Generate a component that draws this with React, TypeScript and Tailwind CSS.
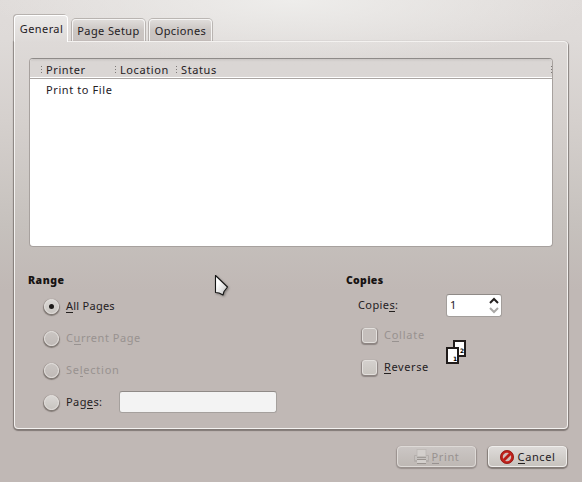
import type { ReactNode } from "react";

function U({ children }: { children: ReactNode }) {
  return <span className="inline-block h-[13px] leading-[13px] shadow-[0_1px_0_currentColor]">{children}</span>;
}

function Grip({ className = "" }: { className?: string }) {
  return (
    <svg className={`shrink-0 ${className}`} width="2" height="8" viewBox="0 0 2 8" fill="#7d7977" shapeRendering="crispEdges">
      <rect y="0" width="1" height="1" />
      <rect y="3" width="1" height="1" />
      <rect y="6" width="1" height="1" />
    </svg>
  );
}

function Radio({ checked = false, disabled = false }: { checked?: boolean; disabled?: boolean }) {
  return (
    <span
      className={`flex size-[15px] shrink-0 items-center justify-center rounded-full border border-[#e6e3e0] shadow-[0_1px_1px_1px_rgba(80,72,68,0.55)] ${
        disabled ? "bg-linear-to-b from-[#cac5c2] to-[#c0bab7]" : "bg-linear-to-b from-[#dad7d4] to-[#c9c5c1]"
      }`}
    >
      {checked && <span className="size-[5px] rounded-full bg-[#1d1a19]" />}
    </span>
  );
}

function Check({ disabled = false }: { disabled?: boolean }) {
  return (
    <span
      className={`size-[15px] shrink-0 rounded-[3px] border border-[#e3e0dd] shadow-[0_1px_1px_1px_rgba(80,72,68,0.45)] ${
        disabled ? "bg-[#c5bfbc]" : "bg-linear-to-b from-[#d4d0cd] to-[#c9c5c0]"
      }`}
    />
  );
}

function Tab({ children, width }: { children: ReactNode; width: string }) {
  return (
    <div
      className={`${width} flex h-[22px] items-center justify-center rounded-t-[4px] border border-b-0 border-[#f5f4f3] bg-linear-to-b from-[#dfdcda] via-[#cbc6c3] to-[#c9c3c0] shadow-[0_0_0_1px_rgba(120,112,108,0.4)]`}
    >
      {children}
    </div>
  );
}

export default function App() {
  return (
    <div className="flex h-[482px] w-[582px] flex-col overflow-hidden bg-[radial-gradient(ellipse_300px_65px_at_50%_0,#eeedeb,transparent),linear-gradient(#e0dcda_0,#dedad8_40px,#d5d0cd_120px,#c6c1bd_225px,#c0b8b5_290px)] px-[14px] font-['Noto_Sans','Open_Sans',sans-serif] text-[11px] leading-[16px] tracking-[0.4px] whitespace-nowrap text-[#24201f]">
      <div className="flex h-[41px] shrink-0 items-end gap-[4px]">
        <div className="z-10 mb-[-1px] flex h-[27px] w-[54px] items-center justify-center rounded-t-[4px] border border-b-0 border-white bg-linear-to-b from-[#ebe9e8] to-[#dedad8] pl-px shadow-[-1px_-1px_0_rgba(120,112,108,0.4)]">
          General
        </div>
        <Tab width="w-[73px]">Page Setup</Tab>
        <Tab width="w-[63px]">Opciones</Tab>
      </div>

      <div className="h-[388px] shrink-0 rounded-[4px] rounded-tl-none border border-[#f4f2f0] px-[14px] pt-[16px] shadow-[0_1px_1px_1px_rgba(95,88,84,0.65)]">
        <div className="h-[189px] w-[524px] overflow-hidden rounded-[4px] border border-[#a7a19e] border-t-[#8e8a88] bg-white">
          <div className="flex h-[20px] items-center border-b border-[#aaa5a2] bg-linear-to-b from-[#cbc7c5] via-[#dad6d4] via-15% to-[#dad6d4] pt-[2px] pl-[11px] tracking-[0.6px] shadow-[inset_0_-1px_0_white]">
            <Grip />
            <span className="w-[72px] pl-[3px]">Printer</span>
            <Grip />
            <span className="w-[59px] pl-[3px]">Location</span>
            <Grip />
            <span className="pl-[3px]">Status</span>
            <Grip className="mr-[-1px] ml-auto" />
          </div>
          <div className="pt-[3px] pl-[16px] tracking-[0.6px]">Print to File</div>
        </div>

        <div className="mt-[24px] flex">
          <section className="w-[318px]">
            <h2 className="-ml-px h-[19px] text-[10.5px] leading-[18px] font-black tracking-[0.5px] text-[#171312]">Range</h2>
            <div className="flex h-[32px] items-center gap-[7px] pl-[15px]">
              <Radio checked />
              <span className="tracking-[0.25px]"><U>A</U>ll Pages</span>
            </div>
            <div className="flex h-[32px] items-center gap-[7px] pl-[15px] text-[#989290]">
              <Radio disabled />
              <span className="tracking-[0.55px]">C<U>u</U>rrent Page</span>
            </div>
            <div className="flex h-[32px] items-center gap-[7px] pl-[15px] text-[#989290]">
              <Radio disabled />
              <span className="tracking-[0.75px]">Se<U>l</U>ection</span>
            </div>
            <div className="flex h-[32px] items-center gap-[7px] pl-[15px]">
              <Radio />
              <span className="w-[46px]">Pag<U>e</U>s:</span>
              <input aria-label="Pages" className="h-[22px] w-[158px] rounded-[3px] border border-[#a5a09d] border-t-[#8f8a87] bg-[#f3f3f3] outline-none" />
            </div>
          </section>

          <section>
            <h2 className="-ml-px h-[19px] text-[10.5px] leading-[18px] font-black tracking-[0.3px] text-[#171312]">Copies</h2>
            <div className="flex h-[30px] items-center pl-[11px]">
              <span className="w-[88px]">Copie<U>s</U>:</span>
              <div className="flex h-[23px] w-[56px] items-center justify-between rounded-[3px] border border-[#a39e9b] border-t-[#8f8a87] bg-white pr-[2px] pl-[3px]">
                <span>1</span>
                <svg width="10" height="18" viewBox="0 0 10 18" fill="none" strokeWidth="2">
                  <path d="M1 7 5 3 9 7" stroke="#24201f" />
                  <path d="M1 12 5 16 9 12" stroke="#aaa8a6" />
                </svg>
              </div>
            </div>
            <div className="mt-[-1px] flex items-center">
              <div className="w-[99px] pl-[15px]">
                <div className="flex h-[32px] items-center gap-[7px] text-[#989290]">
                  <Check disabled />
                  <span className="tracking-[0.75px]">C<U>o</U>llate</span>
                </div>
                <div className="flex h-[32px] items-center gap-[7px]">
                  <Check />
                  <span className="tracking-[0.6px]"><U>R</U>everse</span>
                </div>
              </div>
              <svg className="relative top-px shrink-0" width="20" height="24" viewBox="0 0 20 24">
                <rect x="8" y="1" width="11" height="15" fill="white" stroke="#211c1b" strokeWidth="2" />
                <text x="14" y="13" fontSize="6" fontWeight="700" fontFamily="DejaVu Sans" letterSpacing="0">2</text>
                <rect x="1" y="8" width="11" height="15" fill="white" stroke="#211c1b" strokeWidth="2" />
                <text x="7" y="21" fontSize="6" fontWeight="700" fontFamily="DejaVu Sans" letterSpacing="0">1</text>
              </svg>
            </div>
          </section>
        </div>
      </div>

      <div className="mt-[17px] flex justify-end gap-[12px] pr-px">
        <button className="flex h-[21px] w-[79px] items-center justify-center gap-[3px] rounded-[4px] border border-[#dedad7] bg-linear-to-b from-[#cbc6c4] to-[#beb8b4] tracking-[0.6px] text-[#989290] shadow-[0_1px_1px_1px_rgba(95,88,84,0.4)]">
          <svg width="15" height="15" viewBox="0 0 15 15">
            <rect x="0" y="6" width="15" height="7" rx="1" fill="#b3aeab" />
            <rect x="1" y="7" width="13" height="4" fill="#c6c2bf" />
            <rect x="3" y="0.5" width="9" height="7" fill="#d3cfcc" stroke="#bcb7b4" strokeWidth="0.8" />
            <path d="M3 8.5h9" stroke="#a09b98" />
            <rect x="3" y="10.5" width="9" height="4" fill="#d3cfcc" />
            <path d="M3 10.5h9M3 14.5h9" stroke="#99938f" />
          </svg>
          <span><U>P</U>rint</span>
        </button>
        <button className="flex h-[21px] w-[79px] items-center justify-center gap-[4px] rounded-[4px] border border-[#f0eeec] bg-linear-to-b from-[#dedbd9] to-[#c7c3be] tracking-[0.6px] shadow-[0_1px_1px_1px_rgba(80,72,68,0.55)]">
          <svg width="14" height="14" viewBox="0 0 14 14">
            <circle cx="7" cy="7" r="4.5" fill="#d0bebb" />
            <path d="m3.5 10.5 7-7" stroke="#b81b16" strokeWidth="2.8" />
            <circle cx="7" cy="7" r="5.5" fill="none" stroke="#c2221c" strokeWidth="2.6" />
            <circle cx="7" cy="7" r="6.5" fill="none" stroke="#8c1512" strokeWidth="0.8" />
          </svg>
          <span><U>C</U>ancel</span>
        </button>
      </div>

      {/* Mouse pointer floating above the dialog */}
      <svg className="absolute top-[274px] left-[214px] drop-shadow-[1px_1px_1px_rgba(0,0,0,0.35)]" width="16" height="24" viewBox="0 0 16 24">
        <defs>
          <linearGradient id="pointer" x1="0" y1="0" x2="1" y2="1">
            <stop offset="0.3" stopColor="#ffffff" />
            <stop offset="1" stopColor="#bdbdbd" />
          </linearGradient>
        </defs>
        <path d="M1.5 1.5v17l3.5.5 4 2 1-3.5 3.5-4.5z" fill="url(#pointer)" stroke="#161616" strokeWidth="1.1" strokeLinejoin="round" />
      </svg>
    </div>
  );
}
